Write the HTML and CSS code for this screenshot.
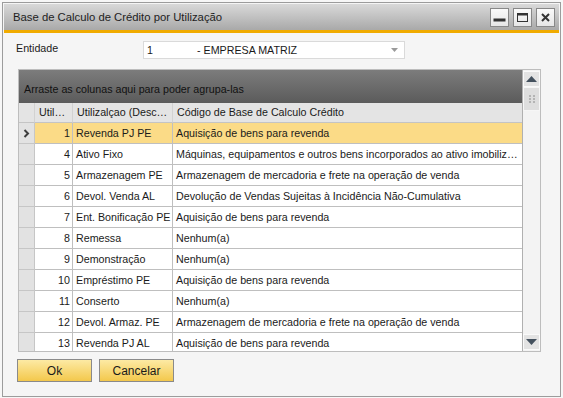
FILE: index.html
```html
<!DOCTYPE html>
<html lang="pt-BR">
<head>
    <meta charset="UTF-8">
    <title>Base de Calculo de Crédito por Utilização</title>
    <link rel="stylesheet" href="styles.css">
</head>
<body>
    <div class="window">
        <!-- Title bar -->
        <div class="titlebar">
            <span class="title">Base de Calculo de Crédito por Utilização</span>
            <div class="title-buttons">
                <span class="tbtn"><svg width="13" height="13" viewBox="0 0 13 13"><rect x="0.5" y="7.5" width="12" height="3" fill="#333"/></svg></span>
                <span class="tbtn"><svg width="13" height="13" viewBox="0 0 13 13"><rect x="1.5" y="2.5" width="10" height="8" fill="none" stroke="#333" stroke-width="1"/><rect x="1.5" y="2.5" width="10" height="2" fill="#333"/></svg></span>
                <span class="tbtn"><svg width="13" height="13" viewBox="0 0 13 13"><path d="M3 3 L10 10 M10 3 L3 10" stroke="#333" stroke-width="2"/></svg></span>
            </div>
        </div>

        <div class="content">
            <div class="field-row">
                <span class="field-label">Entidade</span>
                <div class="combo">
                    <span class="combo-code">1</span>
                    <span class="combo-name">- EMPRESA MATRIZ</span>
                    <svg class="combo-arrow" width="7" height="4" viewBox="0 0 7 4"><path d="M0 0 H7 L3.5 4 Z" fill="#9a9a9a"/></svg>
                </div>
            </div>

            <!-- Grid -->
            <div class="grid">
                <div class="grid-main">
                    <div class="group-panel">Arraste as colunas aqui para poder agrupa-las</div>
                    <div class="grid-row grid-head">
                        <div class="cell sel"></div>
                        <div class="cell">Util…</div>
                        <div class="cell">Utilizalçao (Desc…</div>
                        <div class="cell">Código de Base de Calculo Crédito</div>
                    </div>
                    <div class="grid-row selected">
                        <div class="cell sel"><svg width="7" height="9" viewBox="0 0 7 9"><path d="M1.5 1 L5 4.5 L1.5 8" fill="none" stroke="#3c3c3c" stroke-width="2"/></svg></div>
                        <div class="cell num">1</div>
                        <div class="cell">Revenda PJ PE</div>
                        <div class="cell">Aquisição de bens para revenda</div>
                    </div>
                    <div class="grid-row">
                        <div class="cell sel"></div>
                        <div class="cell num">4</div>
                        <div class="cell">Ativo Fixo</div>
                        <div class="cell">Máquinas, equipamentos e outros bens incorporados ao ativo imobilizado</div>
                    </div>
                    <div class="grid-row">
                        <div class="cell sel"></div>
                        <div class="cell num">5</div>
                        <div class="cell">Armazenagem PE</div>
                        <div class="cell">Armazenagem de mercadoria e frete na operação de venda</div>
                    </div>
                    <div class="grid-row">
                        <div class="cell sel"></div>
                        <div class="cell num">6</div>
                        <div class="cell">Devol. Venda AL</div>
                        <div class="cell">Devolução de Vendas Sujeitas à Incidência Não-Cumulativa</div>
                    </div>
                    <div class="grid-row">
                        <div class="cell sel"></div>
                        <div class="cell num">7</div>
                        <div class="cell">Ent. Bonificação PE</div>
                        <div class="cell">Aquisição de bens para revenda</div>
                    </div>
                    <div class="grid-row">
                        <div class="cell sel"></div>
                        <div class="cell num">8</div>
                        <div class="cell">Remessa</div>
                        <div class="cell">Nenhum(a)</div>
                    </div>
                    <div class="grid-row">
                        <div class="cell sel"></div>
                        <div class="cell num">9</div>
                        <div class="cell">Demonstração</div>
                        <div class="cell">Nenhum(a)</div>
                    </div>
                    <div class="grid-row">
                        <div class="cell sel"></div>
                        <div class="cell num">10</div>
                        <div class="cell">Empréstimo PE</div>
                        <div class="cell">Aquisição de bens para revenda</div>
                    </div>
                    <div class="grid-row">
                        <div class="cell sel"></div>
                        <div class="cell num">11</div>
                        <div class="cell">Conserto</div>
                        <div class="cell">Nenhum(a)</div>
                    </div>
                    <div class="grid-row">
                        <div class="cell sel"></div>
                        <div class="cell num">12</div>
                        <div class="cell">Devol. Armaz. PE</div>
                        <div class="cell">Armazenagem de mercadoria e frete na operação de venda</div>
                    </div>
                    <div class="grid-row">
                        <div class="cell sel"></div>
                        <div class="cell num">13</div>
                        <div class="cell">Revenda PJ AL</div>
                        <div class="cell">Aquisição de bens para revenda</div>
                    </div>
                </div>

                <!-- Vertical scrollbar -->
                <div class="vscroll">
                    <div class="sb-btn"><svg width="11" height="6" viewBox="0 0 11 6"><path d="M0 6 L5.5 0 L11 6 Z" fill="#44515e"/></svg></div>
                    <div class="sb-thumb"><svg width="6" height="8" viewBox="0 0 6 8"><g fill="#b4b4b4"><rect x="0" y="0" width="2" height="2"/><rect x="4" y="0" width="2" height="2"/><rect x="0" y="3" width="2" height="2"/><rect x="4" y="3" width="2" height="2"/><rect x="0" y="6" width="2" height="2"/><rect x="4" y="6" width="2" height="2"/></g></svg></div>
                    <div class="sb-btn sb-down"><svg width="11" height="6" viewBox="0 0 11 6"><path d="M0 0 L11 0 L5.5 6 Z" fill="#44515e"/></svg></div>
                </div>
            </div>

            <div class="actions">
                <button class="btn btn-ok">Ok</button>
                <button class="btn btn-cancel">Cancelar</button>
            </div>
        </div>
    </div>
</body>
</html>
```

FILE: styles.css
```css
body {
    margin: 0;
    background: #f7f7f7;
    font-family: "Liberation Sans", Arial, sans-serif;
    font-size: 10.7px;
    color: #1a1a1a;
}

/* Window frame */
.window {
    box-sizing: border-box;
    width: 559px;
    height: 395px;
    margin: 2px 0 0 2px;
    border: 1px solid #9c9c9c;
    background: #f5f5f5;
}

.titlebar {
    display: flex;
    align-items: center;
    justify-content: space-between;
    height: 26px;
    margin: 1px 1px 0 1px;
    padding: 0 4px 0 9px;
    background: linear-gradient(#d9d9d9, #a9a9a9);
    border-bottom: 3px solid #f0ab00;
}

.title {
    font-size: 11.3px;
    color: #1e1e1e;
}

.title-buttons {
    display: flex;
    gap: 4px;
}

.tbtn {
    box-sizing: border-box;
    display: flex;
    align-items: center;
    justify-content: center;
    width: 19px;
    height: 19px;
    border: 1px solid #888;
    background: linear-gradient(#fafafa, #e6e6e6);
}

/* Content */
.content {
    padding: 8px 0 0 14px;
}

.field-row {
    display: flex;
    align-items: center;
    height: 18px;
}

.field-label {
    width: 126px;
    margin-left: -1px;
    padding-bottom: 4px;
}

.combo {
    box-sizing: border-box;
    display: flex;
    align-items: center;
    width: 262px;
    height: 18px;
    margin-left: 1px;
    padding: 0 6px 0 3px;
    background: #fff;
    border: 1px solid #dadada;
}

.combo-code {
    width: 50px;
}

.combo-name {
    flex: 1;
}

/* Grid */
.grid {
    box-sizing: border-box;
    display: flex;
    width: 523px;
    height: 283px;
    margin: 10px 0 0 1px;
    border: 1px solid #bdbdbd;
    overflow: hidden;
}

.grid-main {
    width: 504px;
    overflow: hidden;
}

.group-panel {
    box-sizing: border-box;
    height: 33px;
    padding: 13px 0 0 5px;
    background: linear-gradient(#7c7c7c, #5b5b5b);
    color: #111;
}

.grid-row {
    display: grid;
    grid-template-columns: 16px 38px 100px 350px;
    height: 21px;
}

.cell {
    box-sizing: border-box;
    display: flex;
    align-items: center;
    padding: 0 3px;
    border-right: 1px solid #bfbfbf;
    border-bottom: 1px solid #bfbfbf;
    background: #fff;
    white-space: nowrap;
    overflow: hidden;
}

.cell:last-child {
    display: block;
    line-height: 20px;
    text-overflow: ellipsis;
}

.cell.num {
    justify-content: flex-end;
    padding-right: 2px;
}

.cell.sel {
    justify-content: center;
    padding: 0;
    background: #e2e2e2;
    border-color: #c6c6c6;
}

.grid-head {
    height: 20px;
}

.grid-head .cell {
    padding-left: 4px;
    background: #e4e4e4;
    border-color: #d2d2d2;
    border-bottom-color: #c4c4c4;
    line-height: 19px;
}

.selected .cell {
    background: #fbdb87;
}

.selected .cell.sel {
    background: #e2e2e2;
}

/* Scrollbar */
.vscroll {
    display: flex;
    flex-direction: column;
    width: 17px;
    background: #f3f3f3;
    border-left: 1px solid #b0b0b0;
}

.sb-btn {
    box-sizing: border-box;
    display: flex;
    align-items: center;
    justify-content: center;
    height: 16px;
    margin: 1px 0 0 0;
    background: #e3e3e3;
    border: 1px solid #fafafa;
}

.sb-thumb {
    box-sizing: border-box;
    display: flex;
    align-items: center;
    justify-content: center;
    height: 24px;
    background: #dedede;
    border: 1px solid #f6f6f6;
}

.sb-down {
    margin-top: auto;
    margin-bottom: 1px;
}

/* Buttons */
.actions {
    display: flex;
    gap: 7px;
    margin-top: 7px;
}

.btn {
    box-sizing: border-box;
    width: 75px;
    height: 23px;
    padding: 0;
    border: 1px solid #8a8a8a;
    background: linear-gradient(#fdeaa4, #f3c84c);
    font-family: "Liberation Sans", Arial, sans-serif;
    font-size: 12px;
    color: #1a1a1a;
}
```
